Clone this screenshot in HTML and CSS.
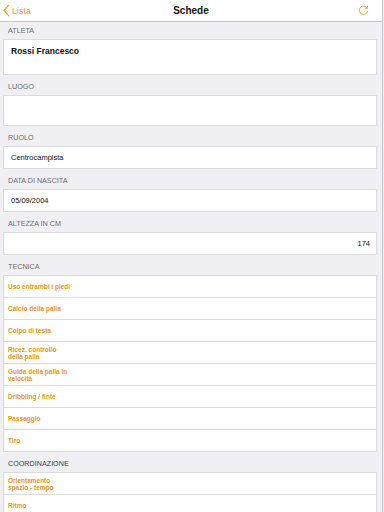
FILE: index.html
```html
<!DOCTYPE html>
<html lang="it">
<head>
    <meta charset="UTF-8">
    <meta name="viewport" content="width=device-width, initial-scale=1.0">
    <title>Schede</title>
    <link rel="stylesheet" href="styles.css">
</head>
<body>
    <div class="page">
        <div class="navbar">
            <div class="nav-back">
                <svg class="chevron" width="7" height="13" viewBox="0 0 7 13">
                    <path d="M6 0.8 L1 6.5 L6 12.2" fill="none" stroke="#f0a030" stroke-width="1.2"/>
                </svg>
                <span>Lista</span>
            </div>
            <div class="nav-title">Schede</div>
            <div class="nav-action">
                <svg width="11" height="11" viewBox="0 0 11 11">
                    <path d="M9.2 3.2 A4.2 4.2 0 1 0 9.6 6.2" fill="none" stroke="#f0a030" stroke-width="0.9"/>
                    <path d="M9.6 0.9 L9.4 3.5 L6.9 3.3" fill="none" stroke="#f0a030" stroke-width="0.9"/>
                </svg>
            </div>
        </div>

        <div class="section first">
            <div class="label">ATLETA</div>
            <div class="box tall"><span class="name">Rossi Francesco</span></div>
        </div>

        <div class="section">
            <div class="label">LUOGO</div>
            <div class="box medium"></div>
        </div>

        <div class="section">
            <div class="label">RUOLO</div>
            <div class="box field">Centrocampista</div>
        </div>

        <div class="section">
            <div class="label">DATA DI NASCITA</div>
            <div class="box field">05/09/2004</div>
        </div>

        <div class="section">
            <div class="label">ALTEZZA IN CM</div>
            <div class="box field right">174</div>
        </div>

        <div class="section">
            <div class="label">TECNICA</div>
            <div class="box list">
                <div class="row">Uso entrambi i piedi</div>
                <div class="row">Calcio della palla</div>
                <div class="row">Colpo di testa</div>
                <div class="row">Ricez. controllo<br>della palla</div>
                <div class="row">Guida della palla in<br>velocità</div>
                <div class="row">Dribbling / finte</div>
                <div class="row">Passaggio</div>
                <div class="row">Tiro</div>
            </div>
        </div>

        <div class="section">
            <div class="label dark">COORDINAZIONE</div>
            <div class="box list">
                <div class="row">Orientamento<br>spazio - tempo</div>
                <div class="row">Ritmo</div>
            </div>
        </div>
    </div>
</body>
</html>
```

FILE: styles.css
```css
body {
    margin: 0;
    background: #efeff4;
    font-family: "Liberation Sans", Arial, sans-serif;
    overflow: hidden;
}
.page {
    width: 382px;
    height: 512px;
    overflow: hidden;
    background: #efeff4;
    border-right: 1px solid #c4c4ca;
}
.navbar {
    height: 21px;
    background: #ffffff;
    border-bottom: 1px solid #c8c7cc;
    display: flex;
    align-items: center;
    justify-content: space-between;
    position: relative;
}
.nav-back {
    display: flex;
    align-items: center;
    gap: 2px;
    padding-left: 3px;
    color: #f0a030;
    font-size: 9px;
}
.nav-title {
    position: absolute;
    left: 0;
    right: 0;
    text-align: center;
    font-size: 10px;
    font-weight: bold;
    color: #111;
    pointer-events: none;
}
.nav-action {
    display: flex;
    padding-right: 13px;
}
.label {
    padding: 7px 0 3px 8px;
    line-height: 10px;
    font-size: 7.2px;
    color: #6d6d72;
}
.section.first .label {
    padding-top: 4px;
}
.label.dark {
    color: #444;
}
.box {
    margin: 0 5px 0 3px;
    background: #ffffff;
    border: 1px solid #dcdcdf;
    box-sizing: border-box;
    font-size: 7.5px;
    color: #111;
    padding: 0 6px 0 7px;
}
.box.tall {
    height: 36px;
    padding-top: 6px;
}
.name {
    font-weight: bold;
    font-size: 8.5px;
}
.box.medium {
    height: 31px;
}
.box.field {
    height: 23px;
    display: flex;
    align-items: center;
}
.box.right {
    justify-content: flex-end;
}
.box.list {
    padding: 0;
    border-bottom: none;
}
.row {
    height: 22px;
    box-sizing: border-box;
    border-bottom: 1px solid #dcdcdf;
    display: flex;
    align-items: center;
    padding-left: 4px;
    font-size: 6.5px;
    line-height: 7px;
    font-weight: bold;
    color: #f09418;
}
```
